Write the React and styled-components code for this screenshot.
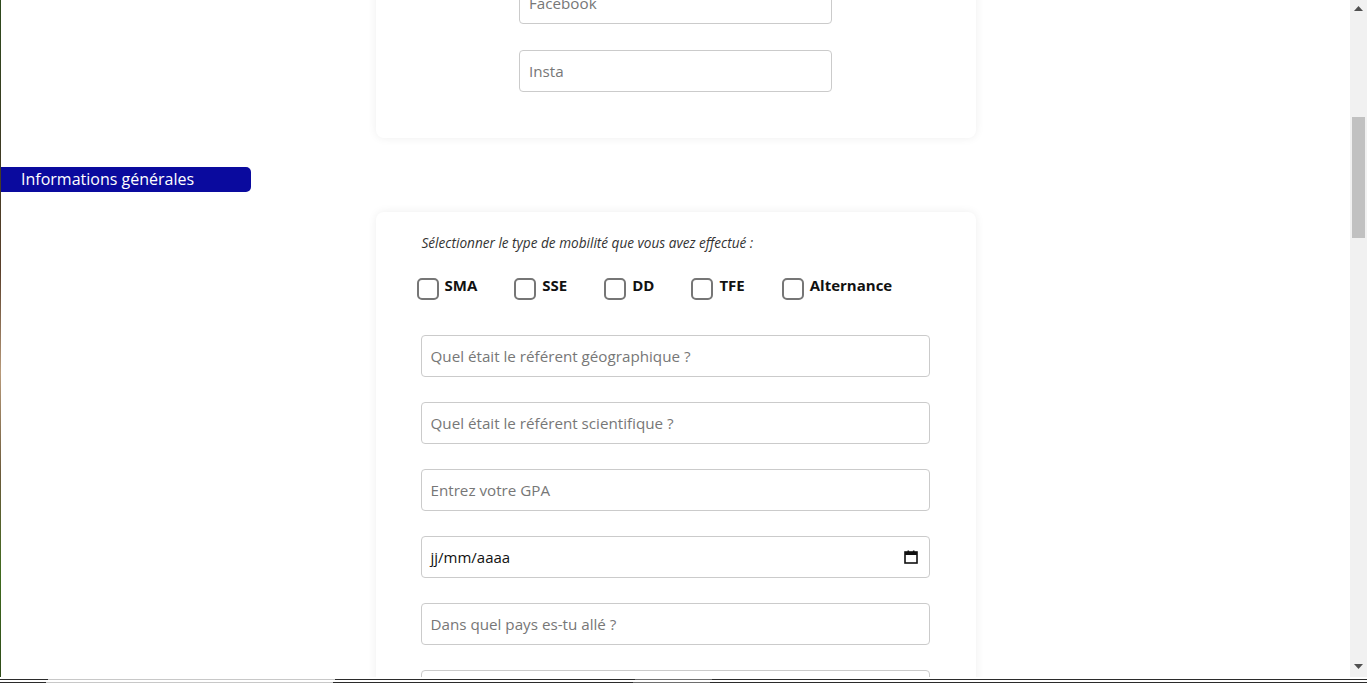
import React from 'react';
import styled, { createGlobalStyle } from 'styled-components';

const GlobalStyle = createGlobalStyle`
  * { box-sizing: border-box; }
  html, body {
    margin: 0;
    padding: 0;
    overflow: hidden;
    background: #fff;
    font-family: "Open Sans", "Noto Sans", sans-serif;
  }
`;

const Screen = styled.div`
  width: 1367px;
  height: 683px;
  display: flex;
  flex-direction: column;
  background: #fff;
`;

const Main = styled.div`
  flex: 1;
  display: flex;
  min-height: 0;
`;

const LeftStrip = styled.div`
  width: 1px;
  background: linear-gradient(
    to bottom,
    #2d4a1c 0%,
    #3b3a22 20%,
    #5a3f2a 40%,
    #b89a7a 55%,
    #6b5a3a 70%,
    #3f6a1e 85%,
    #2e4a18 100%
  );
`;

const Viewport = styled.div`
  flex: 1;
  overflow: hidden;
`;

const Page = styled.div`
  margin-top: -126px;
  display: flex;
  flex-direction: column;
  padding-bottom: 40px;
`;

const Card = styled.section`
  width: 600px;
  margin: ${p => p.$top || 0}px auto 0;
  background: #fff;
  border-radius: 8px;
  box-shadow: 0 0 10px rgba(0, 0, 0, 0.07);
  padding: ${p => p.$padding};
  display: flex;
  flex-direction: column;
  align-items: ${p => (p.$narrow ? 'center' : 'stretch')};
  gap: ${p => p.$gap}px;
`;

const TextInput = styled.input`
  width: ${p => p.$width || '100%'};
  height: 42px;
  border: 1px solid #cbcbcb;
  border-radius: 4px;
  padding: 0 9px;
  font-family: "Open Sans", "Noto Sans", sans-serif;
  font-size: 15.2px;
  color: #333;
  background: #fff;
  outline: none;

  &::placeholder {
    color: #777;
  }
`;

const SectionTag = styled.div`
  margin-top: 29px;
  width: 250px;
  height: 25px;
  background: #0a0a9e;
  color: #fff;
  border-radius: 0 5px 5px 0;
  font-size: 16px;
  line-height: 25px;
  padding-left: 20px;
`;

const Prompt = styled.p`
  margin: 0 0 0 1px;
  font-size: 13.6px;
  font-style: italic;
  color: #333;
  line-height: 16px;
`;

const ChoiceRow = styled.div`
  display: flex;
  gap: 37px;
  margin: -1px 0 10px -4px;
`;

const Choice = styled.label`
  display: flex;
  align-items: flex-start;
  gap: 6px;
  font-size: 15px;
  font-weight: 700;
  color: #111;
  line-height: 20px;
`;

const Box = styled.span`
  width: 22px;
  height: 22px;
  margin-top: 3px;
  border: 2px solid #767676;
  border-radius: 5px;
  background: #fff;
`;

const DateField = styled.div`
  height: 42px;
  border: 1px solid #cbcbcb;
  border-radius: 4px;
  padding: 0 11px 0 9px;
  display: flex;
  align-items: center;
  justify-content: space-between;
  font-size: 15px;
  color: #111;
`;

const Scrollbar = styled.div`
  width: 17px;
  background: #f1f1f1;
  display: flex;
  flex-direction: column;
  align-items: center;
  padding: 0 0 2px;
`;

const ScrollArrow = styled.div`
  width: 17px;
  height: 17px;
  display: flex;
  align-items: center;
  justify-content: center;
`;

const ScrollTrack = styled.div`
  flex: 1;
  display: flex;
  justify-content: center;
`;

const Thumb = styled.div`
  width: 13px;
  height: 121px;
  background: #c1c1c1;
  margin-top: 100px;
`;

const BottomBar = styled.div`
  height: 6px;
  display: flex;
  flex-direction: column;
  justify-content: flex-end;
  gap: 2px;
  padding-top: 1px;
`;

const BarLine = styled.div`
  height: 1px;
  background: linear-gradient(
    to right,
    #2b2b2b 0,
    #2b2b2b ${p => p.$a}px,
    #c8c8c8 ${p => p.$a}px,
    #c8c8c8 ${p => p.$b}px,
    #2b2b2b ${p => p.$b}px,
    #2b2b2b ${p => p.$c}px,
    #6e6e6e ${p => p.$c}px,
    #6e6e6e ${p => p.$d}px,
    #2b2b2b ${p => p.$d}px
  );
`;

const Tri = ({ up }) => (
  <svg width="9" height="5" viewBox="0 0 9 5">
    <path d={up ? 'M0 5 L4.5 0 L9 5 Z' : 'M0 0 L4.5 5 L9 0 Z'} fill="#505050" />
  </svg>
);

const Calendar = () => (
  <svg width="14" height="14" viewBox="0 0 14 14">
    <rect x="1" y="2" width="12" height="11" fill="none" stroke="#111" strokeWidth="1.6" />
    <rect x="1" y="2" width="12" height="3" fill="#111" />
    <rect x="3.5" y="0.5" width="1.6" height="2.5" fill="#111" />
    <rect x="8.9" y="0.5" width="1.6" height="2.5" fill="#111" />
  </svg>
);

const mobilites = ['SMA', 'SSE', 'DD', 'TFE', 'Alternance'];

const App = () => {
  return (
    <>
      <GlobalStyle />
      <Screen>
        <Main>
          <LeftStrip />
          <Viewport>
            <Page>
              <Card $padding="40px 0 46px" $gap={26} $narrow>
                <TextInput $width="313px" placeholder="LinkedIn" />
                <TextInput $width="313px" placeholder="Facebook" />
                <TextInput $width="313px" placeholder="Insta" />
              </Card>

              <SectionTag>Informations générales</SectionTag>

              <Card $top={20} $padding="23px 46px 40px 45px" $gap={25}>
                <Prompt>Sélectionner le type de mobilité que vous avez effectué :</Prompt>
                <ChoiceRow>
                  {mobilites.map(m => (
                    <Choice key={m}>
                      <Box />
                      {m}
                    </Choice>
                  ))}
                </ChoiceRow>
                <TextInput placeholder="Quel était le référent géographique ?" />
                <TextInput placeholder="Quel était le référent scientifique ?" />
                <TextInput placeholder="Entrez votre GPA" />
                <DateField>
                  <span>jj/mm/aaaa</span>
                  <Calendar />
                </DateField>
                <TextInput placeholder="Dans quel pays es-tu allé ?" />
                <TextInput placeholder="Dans quelle ville ?" />
                <TextInput placeholder="Dans quelle université ?" />
              </Card>
            </Page>
          </Viewport>
          <Scrollbar>
            <ScrollArrow><Tri up /></ScrollArrow>
            <ScrollTrack><Thumb /></ScrollTrack>
            <ScrollArrow><Tri /></ScrollArrow>
          </Scrollbar>
        </Main>
        <BottomBar>
          <BarLine $a={48} $b={335} $c={635} $d={712} />
          <BarLine $a={46} $b={333} $c={633} $d={710} />
        </BottomBar>
      </Screen>
    </>
  );
};

export default App;
